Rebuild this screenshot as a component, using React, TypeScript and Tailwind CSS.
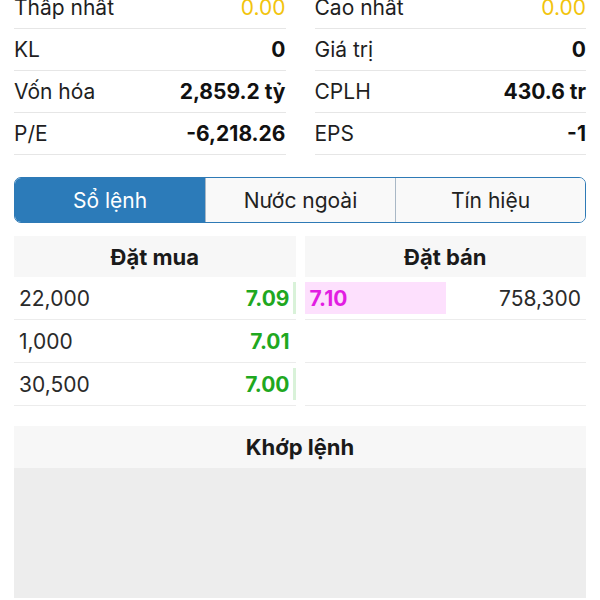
const stats = [
    [
        { label: 'Thấp nhất', value: '0.00', tone: 'yellow' },
        { label: 'Cao nhất', value: '0.00', tone: 'yellow' },
    ],
    [
        { label: 'KL', value: '0' },
        { label: 'Giá trị', value: '0' },
    ],
    [
        { label: 'Vốn hóa', value: '2,859.2 tỷ' },
        { label: 'CPLH', value: '430.6 tr' },
    ],
    [
        { label: 'P/E', value: '-6,218.26' },
        { label: 'EPS', value: '-1' },
    ],
];

const bids = [
    { qty: '22,000', price: '7.09', bar: true },
    { qty: '1,000', price: '7.01', bar: false },
    { qty: '30,500', price: '7.00', bar: true },
];

const asks = [{ price: '7.10', qty: '758,300' }, null, null];

const tabs = ['Sổ lệnh', 'Nước ngoài', 'Tín hiệu'];

function StatRow({ label, value, tone }: { label: string; value: string; tone?: string }) {
    return (
        <div className="flex h-[42px] items-center justify-between border-b border-[#e6e6e6]">
            <span className="text-[#1f1f1f]">{label}</span>
            <span className={tone === 'yellow' ? 'text-[#f2c40d]' : 'font-bold text-[#111]'}>
                {value}
            </span>
        </div>
    );
}

export default function App() {
    return (
        <div
            className="h-[600px] w-[600px] overflow-hidden bg-white text-[21px] leading-none"
            style={{ fontFamily: 'Inter, "Noto Sans", sans-serif' }}
        >
            {/* thông tin cổ phiếu */}
            <div className="-mt-[13px] grid grid-cols-2 gap-x-[29px] px-[14px]">
                {stats.map((pair, i) => (
                    <div key={i} className="contents">
                        <StatRow {...pair[0]} />
                        <StatRow {...pair[1]} />
                    </div>
                ))}
            </div>

            {/* tabs */}
            <div className="mx-[14px] mt-[22px] grid h-[46px] grid-cols-3 overflow-hidden rounded-[7px] border border-[#2e7ab6]">
                {tabs.map((tab, i) => (
                    <div
                        key={tab}
                        className={
                            i === 0
                                ? 'flex items-center justify-center bg-[#2c7bb9] text-white'
                                : 'flex items-center justify-center border-l border-[#a9b8c6] bg-[#f9f9f9] text-[#222]'
                        }
                    >
                        {tab}
                    </div>
                ))}
            </div>

            {/* sổ lệnh */}
            <div className="mx-[14px] mt-[13px] grid grid-cols-2 gap-x-[9px]">
                <div>
                    <div className="flex h-[41px] items-center justify-center bg-[#f7f7f7] text-[22px] font-bold text-[#1a1a1a]">
                        Đặt mua
                    </div>
                    {bids.map((b) => (
                        <div key={b.qty} className="flex h-[43px] items-stretch border-b border-[#ececec] py-[5px]">
                            <span className="flex flex-1 items-center pl-[5px] text-[#2a2a2a]">{b.qty}</span>
                            <span className="flex items-center font-bold text-[#1fa81f]">{b.price}</span>
                            <span className={b.bar ? 'ml-[3px] w-[3px] bg-[#d9f2d9]' : 'ml-[3px] w-[3px]'} />
                        </div>
                    ))}
                </div>
                <div>
                    <div className="flex h-[41px] items-center justify-center bg-[#f7f7f7] text-[22px] font-bold text-[#1a1a1a]">
                        Đặt bán
                    </div>
                    {asks.map((a, i) => (
                        <div key={i} className="flex h-[43px] items-stretch border-b border-[#ececec] py-[5px]">
                            {a && (
                                <>
                                    <span className="flex w-[141px] items-center bg-[#fde0fd] pl-[5px] font-bold text-[#e21de2]">
                                        {a.price}
                                    </span>
                                    <span className="flex flex-1 items-center justify-end pr-[5px] text-[#2a2a2a]">
                                        {a.qty}
                                    </span>
                                </>
                            )}
                        </div>
                    ))}
                </div>
            </div>

            {/* khớp lệnh */}
            <div className="mx-[14px] mt-[20px]">
                <div className="flex h-[42px] items-center justify-center bg-[#f7f7f7] text-[22px] font-bold text-[#1a1a1a]">
                    Khớp lệnh
                </div>
                <div className="h-[130px] bg-[#ededed]" />
            </div>
        </div>
    );
}
